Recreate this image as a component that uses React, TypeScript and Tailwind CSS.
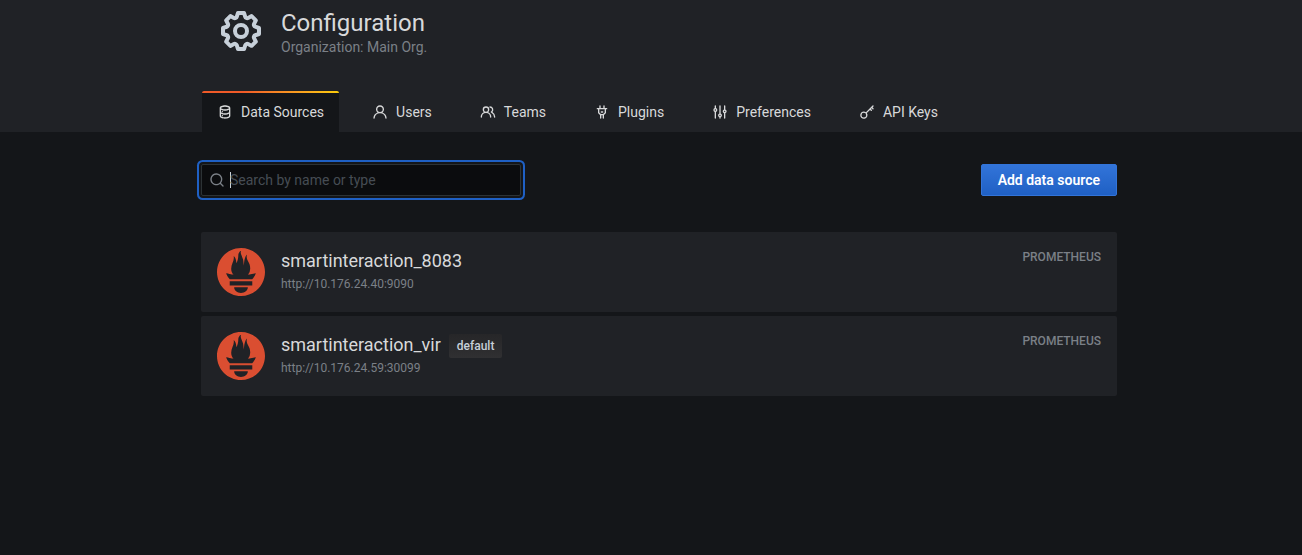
import React from 'react';
import { SiPrometheus } from 'react-icons/si';

const paths = {
  cog: 'M21.32,9.55l-1.89-.63.89-1.78A1,1,0,0,0,20.13,6L18,3.87a1,1,0,0,0-1.15-.19l-1.78.89-.63-1.89A1,1,0,0,0,13.5,2h-3a1,1,0,0,0-.95.68L8.92,4.57,7.14,3.68A1,1,0,0,0,6,3.87L3.87,6a1,1,0,0,0-.19,1.15l.89,1.78-1.89.63A1,1,0,0,0,2,10.5v3a1,1,0,0,0,.68.95l1.89.63-.89,1.78A1,1,0,0,0,3.87,18L6,20.13a1,1,0,0,0,1.15.19l1.78-.89.63,1.89a1,1,0,0,0,.95.68h3a1,1,0,0,0,.95-.68l.63-1.89,1.78.89A1,1,0,0,0,18,20.13L20.13,18a1,1,0,0,0,.19-1.15l-.89-1.78,1.89-.63A1,1,0,0,0,22,13.5v-3A1,1,0,0,0,21.32,9.55ZM20,12.78l-1.2.4A2,2,0,0,0,17.64,16l.57,1.14-1.1,1.1L16,17.64a2,2,0,0,0-2.79,1.16l-.4,1.2H11.22l-.4-1.2A2,2,0,0,0,8,17.64l-1.14.57-1.1-1.1L6.36,16A2,2,0,0,0,5.2,13.18L4,12.78V11.22l1.2-.4A2,2,0,0,0,6.36,8L5.79,6.89l1.1-1.1L8,6.36A2,2,0,0,0,10.82,5.2l.4-1.2h1.56l.4,1.2A2,2,0,0,0,16,6.36l1.14-.57,1.1,1.1L17.64,8a2,2,0,0,0,1.16,2.79l1.2.4ZM12,8a4,4,0,1,0,4,4A4,4,0,0,0,12,8Zm0,6a2,2,0,1,1,2-2A2,2,0,0,1,12,14Z',
  database: 'M8,16.5a1,1,0,1,0,1,1A1,1,0,0,0,8,16.5ZM12,2C8,2,4,3.37,4,6V18c0,2.63,4,4,8,4s8-1.37,8-4V6C20,3.37,16,2,12,2Zm6,16c0,.71-2.28,2-6,2s-6-1.29-6-2V14.73A13.16,13.16,0,0,0,12,16a13.16,13.16,0,0,0,6-1.27Zm0-6c0,.71-2.28,2-6,2s-6-1.29-6-2V8.73A13.16,13.16,0,0,0,12,10a13.16,13.16,0,0,0,6-1.27ZM12,8C8.28,8,6,6.71,6,6s2.28-2,6-2,6,1.29,6,2S15.72,8,12,8ZM8,10.5a1,1,0,1,0,1,1A1,1,0,0,0,8,10.5Z',
  user: 'M15.71,12.71a6,6,0,1,0-7.42,0,10,10,0,0,0-6.22,8.18,1,1,0,0,0,2,.22,8,8,0,0,1,15.9,0,1,1,0,0,0,1,.89h.11a1,1,0,0,0,.88-1.1A10,10,0,0,0,15.71,12.71ZM12,12a4,4,0,1,1,4-4A4,4,0,0,1,12,12Z',
  users: 'M12.3,12.22A4.92,4.92,0,0,0,14,8.5a5,5,0,0,0-10,0,4.92,4.92,0,0,0,1.7,3.72A8,8,0,0,0,1,19.5a1,1,0,0,0,2,0,6,6,0,0,1,12,0,1,1,0,0,0,2,0A8,8,0,0,0,12.3,12.22ZM9,11.5a3,3,0,1,1,3-3A3,3,0,0,1,9,11.5Zm9.74.32A5,5,0,0,0,15,3.5a1,1,0,0,0,0,2,3,3,0,0,1,3,3,3,3,0,0,1-1.5,2.59,1,1,0,0,0-.5.84,1,1,0,0,0,.45.86l.39.26.13.07a7,7,0,0,1,4,6.38,1,1,0,0,0,2,0A9,9,0,0,0,18.74,11.82Z',
  plug: 'M19,6H16V3a1,1,0,0,0-2,0V6H10V3A1,1,0,0,0,8,3V6H5A1,1,0,0,0,5,8H6v5a1,1,0,0,0,.29.71L9,16.41V21a1,1,0,0,0,2,0V17h2v4a1,1,0,0,0,2,0V16.41l2.71-2.7A1,1,0,0,0,18,13V8h1a1,1,0,0,0,0-2Zm-3,6.59L13.59,15H10.41L8,12.59V8h8ZM11,13h2a1,1,0,0,0,0-2H11a1,1,0,0,0,0,2Z',
  sliders: 'M20,8.18V3a1,1,0,0,0-2,0V8.18a3,3,0,0,0,0,5.64V21a1,1,0,0,0,2,0V13.82a3,3,0,0,0,0-5.64ZM19,12a1,1,0,1,1,1-1A1,1,0,0,1,19,12Zm-6,2.18V3a1,1,0,0,0-2,0V14.18a3,3,0,0,0,0,5.64V21a1,1,0,0,0,2,0V19.82a3,3,0,0,0,0-5.64ZM12,18a1,1,0,1,1,1-1A1,1,0,0,1,12,18ZM6,6.18V3A1,1,0,0,0,4,3V6.18a3,3,0,0,0,0,5.64V21a1,1,0,0,0,2,0V11.82A3,3,0,0,0,6,6.18ZM5,10A1,1,0,1,1,6,9,1,1,0,0,1,5,10Z',
  key: 'M21.71,2.29a1,1,0,0,0-1.42,0L10.4,12.19a5.5,5.5,0,1,0,1.41,1.41L16.5,8.91l1.29,1.3a1,1,0,0,0,1.42-1.42L17.91,7.5,19,6.41l1.29,1.3a1,1,0,0,0,1.42-1.42L20.41,5l1.3-1.29A1,1,0,0,0,21.71,2.29ZM7.25,20.25A3.5,3.5,0,1,1,10.75,16.75,3.5,3.5,0,0,1,7.25,20.25Z',
  search: 'M21.71,20.29,18,16.61A9,9,0,1,0,16.61,18l3.68,3.68a1,1,0,0,0,1.42,0A1,1,0,0,0,21.71,20.29ZM11,18a7,7,0,1,1,7-7A7,7,0,0,1,11,18Z',
};

type IconName = keyof typeof paths;

function Icon({ name, className }: { name: IconName; className: string }) {
  return (
    <svg viewBox="0 0 24 24" fill="currentColor" aria-hidden="true" className={className}>
      <path d={paths[name]} />
    </svg>
  );
}

const tabs: { label: string; icon: IconName; active?: boolean }[] = [
  { label: 'Data Sources', icon: 'database', active: true },
  { label: 'Users', icon: 'user' },
  { label: 'Teams', icon: 'users' },
  { label: 'Plugins', icon: 'plug' },
  { label: 'Preferences', icon: 'sliders' },
  { label: 'API Keys', icon: 'key' },
];

const sources = [
  { name: 'smartinteraction_8083', url: 'http://10.176.24.40:9090', isDefault: false },
  { name: 'smartinteraction_vir', url: 'http://10.176.24.59:30099', isDefault: true },
];

export default function App() {
  return (
    <div className="min-h-screen bg-[#141619] font-['Roboto',sans-serif] text-sm text-[#c7d0d9]">
      <header className="bg-[#202226] pl-4">
        <div className="mx-auto max-w-[948px] px-4">
          <div className="flex gap-4 px-4 pt-[7px] pb-9">
            <Icon name="cog" className="size-12 shrink-0" />
            <div>
              <h1 className="text-2xl leading-8 text-[#d8d9da]">Configuration</h1>
              <p className="leading-4 text-[#7b8087]">Organization: Main Org.</p>
            </div>
          </div>
          <nav className="flex gap-4">
            {tabs.map((tab) => (
              <a
                key={tab.label}
                href="#"
                aria-current={tab.active ? 'page' : undefined}
                className={
                  tab.active
                    ? 'relative flex h-[41px] items-center gap-2 border-x border-[#202226] bg-[#141619] px-[15px] text-[#d8d9da] before:absolute before:inset-x-0 before:top-0 before:h-[2px] before:rounded-t-xs before:bg-linear-to-r before:from-[#f05a28] before:from-30% before:to-[#fbca0a] before:to-99%'
                    : 'flex h-[41px] items-center gap-2 px-4 text-[#d8d9da]'
                }
              >
                <Icon name={tab.icon} className="size-4 shrink-0" />
                {tab.label}
              </a>
            ))}
          </nav>
        </div>
      </header>

      <main className="pl-4">
        <div className="mx-auto max-w-[948px] px-4 pt-8">
          <div className="flex items-center justify-between">
            <label className="flex h-8 w-80 items-center rounded-xs border border-[#2c3235] bg-[#0b0c0e] pl-[7px] ring-2 ring-[#1f60c4] ring-offset-2 ring-offset-[#141619]">
              <Icon name="search" className="size-4 shrink-0 text-[#7b8087]" />
              <span className="-mr-px ml-[5px] h-4 w-px bg-[#c7d0d9]" />
              <input
                type="text"
                aria-label="Search by name or type"
                placeholder="Search by name or type"
                className="min-w-0 flex-1 bg-transparent outline-none placeholder:text-[#464c54]"
              />
            </label>
            <button
              type="button"
              className="flex h-8 items-center rounded-xs border border-[#3274d9] bg-linear-to-b from-[#3274d9] to-[#1f60c4] px-4 pb-px font-semibold text-white"
            >
              Add data source
            </button>
          </div>

          <ul className="mt-9 flex flex-col gap-1">
            {sources.map((source) => (
              <li key={source.name} className="flex h-20 items-start gap-4 rounded-xs bg-[#202226] p-4">
                <SiPrometheus className="size-12 shrink-0 text-[#da4e31]" aria-hidden="true" />
                <div className="flex-1">
                  <div className="flex h-[26px] items-center gap-2">
                    <h2 className="text-lg leading-6 text-[#d8d9da]">{source.name}</h2>
                    {source.isDefault && (
                      <span className="mt-0.5 rounded-xs bg-linear-to-b from-[#262628] to-[#303032] px-2 text-xs leading-6 font-medium">
                        default
                      </span>
                    )}
                  </div>
                  <p className="mt-0.5 text-xs leading-4 text-[#7b8087]">{source.url}</p>
                </div>
                <span className="text-xs leading-[18px] font-medium text-[#7b8087]">PROMETHEUS</span>
              </li>
            ))}
          </ul>
        </div>
      </main>
    </div>
  );
}
